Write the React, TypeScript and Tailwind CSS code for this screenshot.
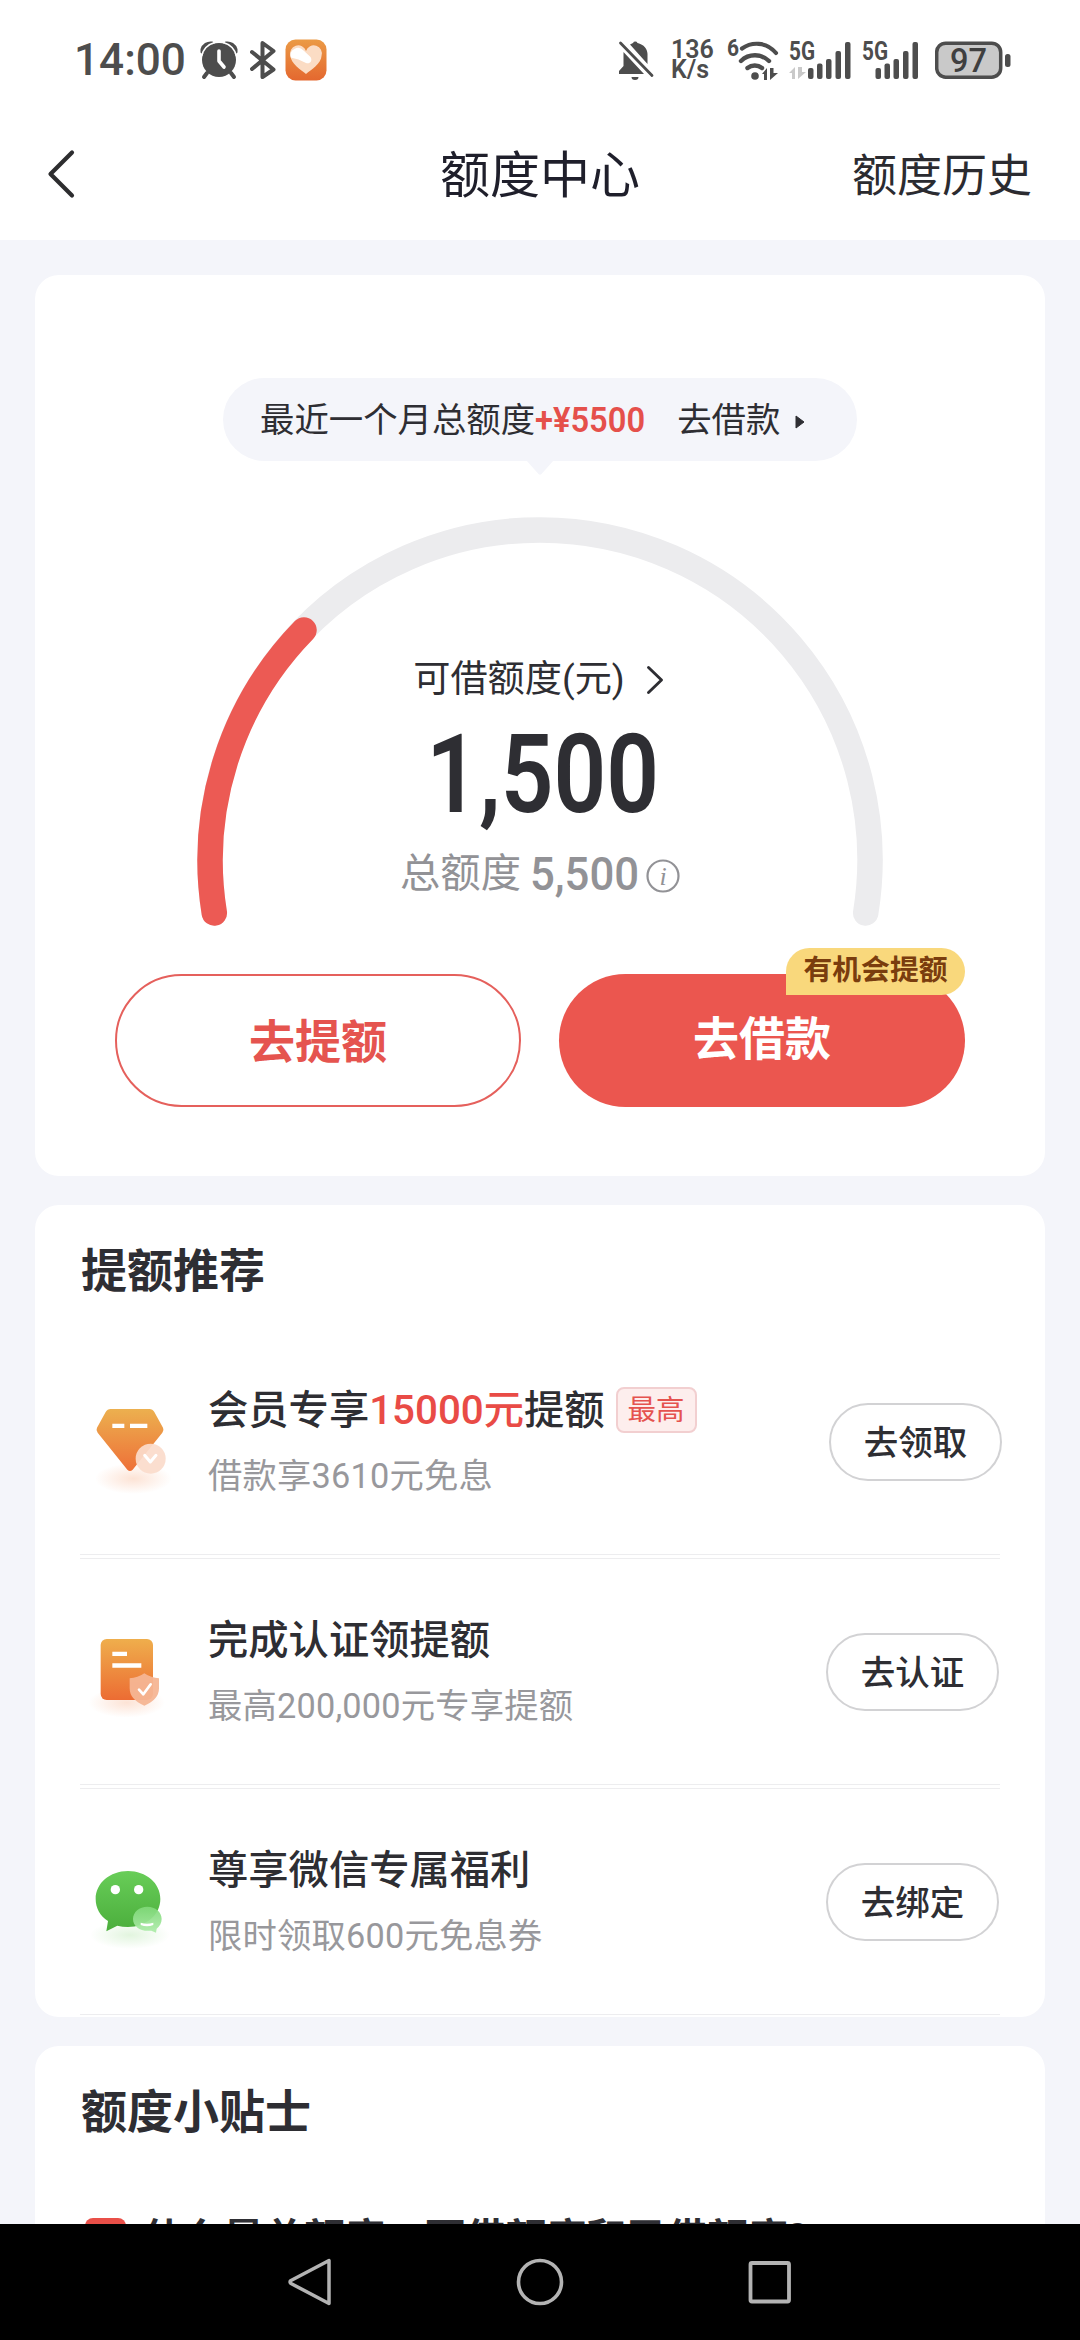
import type { ReactNode } from "react";

const fontCls = "font-[Roboto,'Noto_Sans_CJK_SC',sans-serif]";
const narrowCls = "inline-block origin-left";

function AlarmIcon() {
  return (
    <svg className="ml-4 h-[40px] w-[38px]" viewBox="0 0 38 40" fill="none">
      <circle cx="19" cy="20" r="17" fill="#4d4d4d" />
      <path d="M2 9.500A9 9 0 0 1 12 3L2 12ZM36 9.500A9 9 0 0 0 26 3L36 12Z" fill="#4d4d4d" stroke="#4d4d4d" strokeWidth="3" strokeLinejoin="round" />
      <path d="M1.500 16A19 19 0 0 1 14.500 2.500M36.500 16A19 19 0 0 0 23.500 2.500" stroke="#fff" strokeWidth="1.500" />
      <path d="M7 33 4 37M31 33l3 4" stroke="#4d4d4d" strokeWidth="4" strokeLinecap="round" />
      <path d="M19 11v10l5 6" stroke="#fff" strokeWidth="3.600" strokeLinecap="round" strokeLinejoin="round" />
    </svg>
  );
}

function BluetoothIcon() {
  return (
    <svg className="ml-[12px] h-[40px] w-[26px]" viewBox="0 0 26 40" fill="none" stroke="#4d4d4d" strokeWidth="4" strokeLinecap="round" strokeLinejoin="round">
      <path d="M2 12 23.500 29.500 12.500 37V3l11 8L2 29" />
    </svg>
  );
}

function HealthIcon() {
  return (
    <svg className="ml-[9px] h-[42px] w-[42px]" viewBox="0 0 42 42">
      <defs>
        <linearGradient id="health" x1="0" y1="0" x2="0" y2="1">
          <stop offset="0" stopColor="#eb9a45" />
          <stop offset="1" stopColor="#e4682f" />
        </linearGradient>
      </defs>
      <rect x=".5" y=".5" width="41" height="41" rx="10" fill="url(#health)" />
      <path d="M21 35C16 31 5.500 24 5.500 17a7.500 7.500 0 0 1 15.500-5 7.500 7.500 0 0 1 15.500 5C36.500 24 26 31 21 35Z" fill="#fbdcc4" />
      <path d="M5.700 18.500A7.500 7.500 0 0 1 18.500 11.500L25.500 18c2.500 4-1 7.500-4.500 6L13.500 20.500Z" fill="#fff" />
    </svg>
  );
}

function MutedIcon() {
  return (
    <svg className="h-[40px] w-[36px]" viewBox="0 0 36 40" fill="#4d4d4d">
      <path d="M5.500 12 26 34H1v-3l4.500-5ZM12 4.500 15 3a2.500 2.500 0 0 1 4.500 0C26 4.500 29.500 9 29.500 14v10Z" />
      <path d="M2.500 3 34 35.500" stroke="#4d4d4d" strokeWidth="2.800" strokeLinecap="round" />
      <path d="M13.500 37h7a3.500 3 0 0 1-7 0Z" />
    </svg>
  );
}

function WifiIcon() {
  return (
    <svg className="ml-[13px] h-[42px] w-[54px] overflow-visible" viewBox="0 0 54 42" fill="none" stroke="#4d4d4d">
      <text x="0" y="17" fontSize="23" fontWeight="700" fill="#4d4d4d" stroke="none" textLength="12" lengthAdjust="spacingAndGlyphs">6</text>
      <path d="M15 9.500C24 3 39 2 49 14" strokeWidth="4.200" strokeLinecap="round" />
      <path d="M14 22a20 20 0 0 1 28 0" strokeWidth="4.400" strokeLinecap="round" />
      <path d="M20.500 29a11.500 11.500 0 0 1 14.500 0" strokeWidth="4.400" strokeLinecap="round" />
      <circle cx="28" cy="37" r="3.800" fill="#4d4d4d" stroke="none" />
      <path d="M35 35l5-6v12h-3v-6ZM43 29v12l8-7h-4.500v-5Z" fill="#4d4d4d" stroke="none" />
    </svg>
  );
}

function Signal({ data }: { data?: boolean }) {
  return (
    <svg className="h-[40px] w-[62px] overflow-visible" viewBox="0 0 62 40" fill="#4d4d4d">
      <text x="0" y="20" fontSize="25.500" fontWeight="700" textLength="26" lengthAdjust="spacingAndGlyphs">5G</text>
      {data && <path d="M0 33l6-6v12H3v-6ZM9 27v12l8-7h-4v-5Z" fill="#c9c9c9" />}
      <g transform={data ? "translate(5.500 0)" : undefined}>
        <rect x="13.500" y="28" width="5.500" height="11" rx="2" />
        <rect x="22.500" y="23.500" width="5.500" height="15.500" rx="2" />
        <rect x="31.500" y="19" width="5.500" height="20" rx="2" />
        <rect x="41" y="11" width="5.500" height="28" rx="2" />
        <rect x="50.500" y="2" width="5.500" height="37" rx="2" />
      </g>
    </svg>
  );
}

function Battery() {
  return (
    <svg className="ml-[11px] h-[40px] w-[76px]" viewBox="0 0 76 40">
      <rect x="1.700" y="3.200" width="64" height="34" rx="9" fill="#c9c9c9" stroke="#4d4d4d" strokeWidth="3.500" />
      <text x="15" y="32" fontSize="33" fontWeight="500" fill="#3f3f3f" textLength="37" lengthAdjust="spacingAndGlyphs">97</text>
      <rect x="70" y="14" width="5.500" height="13" rx="2.500" fill="#4d4d4d" />
    </svg>
  );
}

function StatusBar() {
  return (
    <div className="flex h-[120px] shrink-0 items-center bg-white pl-[74px] text-[#4d4d4d]">
      <span className="w-[110px] text-[45px] leading-[50px]">
        <span className={`${narrowCls} scale-x-[0.98] font-medium`}>14:00</span>
      </span>
      <AlarmIcon />
      <BluetoothIcon />
      <HealthIcon />
      <div className="ml-auto flex items-center pr-[69px]">
        <MutedIcon />
        <div className="ml-[17px] w-[43px] text-[25px] font-semibold leading-5">
          <div>136</div>
          <div>K/s</div>
        </div>
        <WifiIcon />
        <div className="ml-[8px] flex gap-[11px]">
          <Signal data />
          <Signal />
        </div>
        <Battery />
      </div>
    </div>
  );
}

function Header() {
  return (
    <header className="grid h-[120px] shrink-0 grid-cols-3 items-center bg-white pb-2 text-[#2b2b30]">
      <svg className="mb-[4px] ml-[46px] h-[52px] w-[30px]" viewBox="0 0 30 52" fill="none" stroke="#2d2d2f" strokeWidth="4.200" strokeLinecap="round" strokeLinejoin="round">
        <path d="M26 4.500 4.500 26 26 47.500" />
      </svg>
      <h1 className="text-center text-[50px] leading-none text-[#1f1f2b]">额度中心</h1>
      <span className="pr-[48px] text-right text-[45px] leading-none">额度历史</span>
    </header>
  );
}

function Gauge() {
  return (
    <svg className="[grid-area:1/1] h-[420px] w-[700px]" viewBox="190 510 700 420" fill="none" strokeWidth="25.500" strokeLinecap="round">
      <path d="M214.300 913A330 330 0 1 1 865.700 913" stroke="#ececee" />
      <path d="M214.300 913A330 330 0 0 1 304 630" stroke="#ec5a54" />
    </svg>
  );
}

function QuotaCard() {
  return (
    <section className="mx-[35px] mt-[35px] flex h-[901px] shrink-0 flex-col items-center rounded-3xl bg-white text-[#2e2e33]">
      <div className="relative mt-[103px] flex h-[83px] w-[634px] items-center rounded-full bg-[#f4f5fa] pl-[37px] pt-px text-[34.400px] leading-none">
        <span>最近一个月总额度</span>
        <span className="w-[142px] whitespace-nowrap text-[#e5504b]">
          <span className={`${narrowCls} scale-x-[0.95] font-semibold`}>+¥5500</span>
        </span>
        <span>去借款</span>
        <svg className="ml-[15px] mt-[4px] h-[14px] w-[10px]" viewBox="0 0 10 14" fill="#2e2e33">
          <path d="M1 1 9 7 1 13Z" stroke="#2e2e33" strokeLinejoin="round" />
        </svg>
        <svg className="absolute left-[303px] top-[82px] h-[15px] w-[28px]" viewBox="0 0 28 15" fill="#f4f5fa">
          <path d="M0 0h28L15.500 14q-1.500 1.500-3 0Z" />
        </svg>
      </div>

      <div className="mt-[49px] grid h-[420px]">
        <Gauge />
        <div className="flex flex-col items-center pt-[142px] [grid-area:1/1]">
          <div className="flex h-[56px] items-center pr-[3px] text-[37.200px]">
            可借额度(元)
            <svg className="ml-[21px] h-[30px] w-[18px]" viewBox="0 0 18 30" fill="none" stroke="#2e2e33" strokeWidth="2.900" strokeLinecap="round" strokeLinejoin="round">
              <path d="M2.500 2.500 15.500 15 2.500 27.500" />
            </svg>
          </div>
          <div className="ml-[5px] mt-[12px] scale-x-[0.84] text-[110px] font-semibold leading-[110px]">1,500</div>
          <div className="mt-[19px] flex h-[50px] items-center text-[40.300px] text-[#929296]">
            总额度
            <span className="ml-[9px] w-[108px] text-[46px]">
              <span className={`${narrowCls} scale-x-[0.95] font-medium`}>5,500</span>
            </span>
            <svg className="ml-[8px] mt-[4px] h-[34px] w-[34px]" viewBox="0 0 34 34">
              <circle cx="17" cy="17" r="15.500" fill="none" stroke="#929296" strokeWidth="2.200" />
              <text x="17" y="26" textAnchor="middle" fontSize="26" fontStyle="italic" fill="#929296" className="font-['Liberation_Serif',serif]">i</text>
            </svg>
          </div>
        </div>
      </div>

      <div className="mt-[44px] flex gap-[38px] text-[46px] font-bold leading-none">
        <button className="h-[133px] w-[406px] rounded-full border-2 border-[#e5605c] pt-[2px] text-[#e5544f]">去提额</button>
        <button className="relative h-[133px] w-[406px] rounded-full bg-[#eb564f] pb-[3px] text-white">
          去借款
          <span className="absolute right-0 top-[-26px] flex h-[47px] w-[179px] items-center justify-center rounded-3xl rounded-bl-none bg-[#f9d87c] pb-[2px] text-[28.800px] text-[#7a3d0e]">
            有机会提额
          </span>
        </button>
      </div>
    </section>
  );
}

function DiamondIcon() {
  return (
    <svg className="h-[120px] w-[120px]" viewBox="0 0 360 360">
      <defs>
        <linearGradient id="diamond" x1="0" y1="0" x2="0" y2="1">
          <stop offset="0" stopColor="#ecb04f" />
          <stop offset="1" stopColor="#ee7038" />
        </linearGradient>
        <radialGradient id="glow">
          <stop offset="0" stopColor="#f58a50" stopOpacity=".24" />
          <stop offset="1" stopColor="#f58a50" stopOpacity="0" />
        </radialGradient>
      </defs>
      <ellipse cx="160" cy="296" rx="115" ry="46" fill="url(#glow)" />
      <path d="M92 87H208q10 0 15 9L249 143q4 8-2 15L158 269q-8 8-16 0L53 158q-6-7-2-15L77 96q5-9 15-9Z" fill="url(#diamond)" />
      <path d="M97 131h36v13H97ZM150 131h52v13h-52Z" fill="#fff" />
      <circle cx="212" cy="236" r="45" fill="#fbdccb" fillOpacity=".93" />
      <path d="M194 226l17 20 17-20" fill="none" stroke="#fff" strokeWidth="9" strokeLinecap="round" strokeLinejoin="round" />
    </svg>
  );
}

function CertIcon() {
  return (
    <svg className="h-[120px] w-[120px]" viewBox="0 0 360 360">
      <defs>
        <linearGradient id="cert" x1="0" y1="0" x2="0" y2="1">
          <stop offset="0" stopColor="#efae4c" />
          <stop offset="1" stopColor="#ec6c33" />
        </linearGradient>
      </defs>
      <ellipse cx="140" cy="278" rx="115" ry="45" fill="url(#glow)" />
      <rect x="62" y="87" width="157" height="183" rx="18" fill="url(#cert)" />
      <path d="M97 125h44v13H97ZM97 160h87v13H97Z" fill="#fff" />
      <path d="M193 190q20 14 44 15v30q0 34-44 52-44-18-44-52v-30q24-1 44-15Z" fill="#f6b594" fillOpacity=".95" />
      <path d="M177 239l13 14 22-30" fill="none" stroke="#fff" strokeWidth="8" strokeLinecap="round" strokeLinejoin="round" />
    </svg>
  );
}

function WechatIcon() {
  return (
    <svg className="h-[120px] w-[120px]" viewBox="0 0 360 360">
      <defs>
        <linearGradient id="wechat" x1="0" y1="0" x2="0" y2="1">
          <stop offset="0" stopColor="#68cd58" />
          <stop offset="1" stopColor="#4bae3c" />
        </linearGradient>
        <linearGradient id="bubble" x1="0" y1="0" x2="0" y2="1">
          <stop offset="0" stopColor="#7fd878" />
          <stop offset="1" stopColor="#aeecaa" />
        </linearGradient>
        <radialGradient id="greenGlow">
          <stop offset="0" stopColor="#6ccc5c" stopOpacity=".2" />
          <stop offset="1" stopColor="#6ccc5c" stopOpacity="0" />
        </radialGradient>
      </defs>
      <ellipse cx="150" cy="285" rx="120" ry="42" fill="url(#greenGlow)" />
      <path d="M144 93c54 0 97 36 97 84s-43 84-97 84q-17 0-32-4L79 274l5-31C60 228 47 204 47 177c0-48 43-84 97-84Z" fill="url(#wechat)" />
      <circle cx="106" cy="149" r="14" fill="#fff" />
      <circle cx="176" cy="149" r="14" fill="#fff" />
      <path d="M202 200c24 0 43 16 43 37 0 12-6 22-15 29l-2 12-14-6C182 276 159 260 159 237c0-21 19-37 43-37Z" fill="url(#bubble)" fillOpacity=".93" />
      <path d="M182 248q19 6 38 0v7q-19 8-38 0Z" fill="#fff" />
    </svg>
  );
}

type Offer = {
  icon: ReactNode;
  title: ReactNode;
  tag?: string;
  desc: string;
  action: string;
};

const offers: Offer[] = [
  {
    icon: <DiamondIcon />,
    title: (
      <>
        会员专享<span className="text-[#e94b46]">15000元</span>提额
      </>
    ),
    tag: "最高",
    desc: "借款享3610元免息",
    action: "去领取",
  },
  {
    icon: <CertIcon />,
    title: "完成认证领提额",
    desc: "最高200,000元专享提额",
    action: "去认证",
  },
  {
    icon: <WechatIcon />,
    title: "尊享微信专属福利",
    desc: "限时领取600元免息券",
    action: "去绑定",
  },
];

function OfferRow({ offer }: { offer: Offer }) {
  return (
    <li className="relative flex h-[230px] items-center">
      <div className="mb-[4px]">{offer.icon}</div>
      <div className="ml-[8px] flex flex-col">
        <div className="flex h-[46px] items-center text-[40.300px] font-medium leading-none text-[#2e2e33]">
          <span className="pt-[4px]">{offer.title}</span>
          {offer.tag && (
            <span className="ml-[11px] mt-px flex h-[46px] w-[81px] items-center justify-center rounded-lg border-2 border-[#f2cfd0] bg-[#fdeeed] pt-[3px] text-[28.500px] font-normal text-[#e5534f]">
              {offer.tag}
            </span>
          )}
        </div>
        <div className="mt-[21px] text-[34.300px] leading-[44px] tracking-[0.2px] text-[#98989c]">{offer.desc}</div>
      </div>
      <button
        className={`ml-auto h-[78px] w-[173px] rounded-full border-2 border-[#d2d2d4] pt-[3px] text-[34.500px] font-medium leading-none text-[#2e2e33] ${offer.tag ? "mr-[-2px]" : "mr-px"}`}
      >
        {offer.action}
      </button>
      <div className="absolute bottom-[-2px] left-0 h-[5px] w-[920px] border-y border-[#ededef]" />
    </li>
  );
}

function OfferCard() {
  return (
    <section className="mx-[35px] mt-[29px] h-[812px] shrink-0 overflow-hidden rounded-3xl bg-white px-[45px]">
      <h2 className="mt-[43px] pl-px text-[46px] font-bold leading-[46px] text-[#2e2e33]">提额推荐</h2>
      <ul className="mt-[33px]">
        {offers.map((offer) => (
          <OfferRow key={offer.action} offer={offer} />
        ))}
      </ul>
    </section>
  );
}

function TipsCard() {
  return (
    <section className="mx-[35px] mt-[29px] min-h-0 flex-1 overflow-hidden rounded-t-3xl bg-white px-[45px] text-[#2e2e33]">
      <h2 className="mt-[43px] pl-px text-[46px] font-bold leading-[46px]">额度小贴士</h2>
      <div className="mt-[83px] flex items-start pl-[5px]">
        <div className="h-[40px] w-[41px] rounded-lg bg-[#e94f48]" />
        <div className="ml-[17px] whitespace-nowrap text-[40.300px] font-bold leading-[42px]">
          什么是总额度、可借额度和已借额度?
        </div>
      </div>
    </section>
  );
}

function NavBar() {
  return (
    <nav className="flex h-[116px] shrink-0 items-center justify-center gap-[180px] bg-black">
      <svg className="h-[50px] w-[50px]" viewBox="0 0 50 50" fill="none" stroke="#b3b3b3" strokeWidth="3.500" strokeLinejoin="round">
        <path d="M44 3.500v43L6 26.500q-2-1.500 0-3Z" />
      </svg>
      <svg className="h-[50px] w-[50px]" viewBox="0 0 50 50" fill="none" stroke="#b3b3b3" strokeWidth="3.600">
        <circle cx="25" cy="25" r="21.500" />
      </svg>
      <svg className="h-[50px] w-[50px]" viewBox="0 0 50 50" fill="none" stroke="#b3b3b3" strokeWidth="3.800">
        <rect x="5.500" y="6" width="38.500" height="38.500" rx="1.500" />
      </svg>
    </nav>
  );
}

export default function App() {
  return (
    <div className={`flex h-[2340px] w-[1080px] flex-col overflow-hidden bg-[#f4f5fa] ${fontCls}`}>
      <StatusBar />
      <Header />
      <QuotaCard />
      <OfferCard />
      <TipsCard />
      <NavBar />
    </div>
  );
}
